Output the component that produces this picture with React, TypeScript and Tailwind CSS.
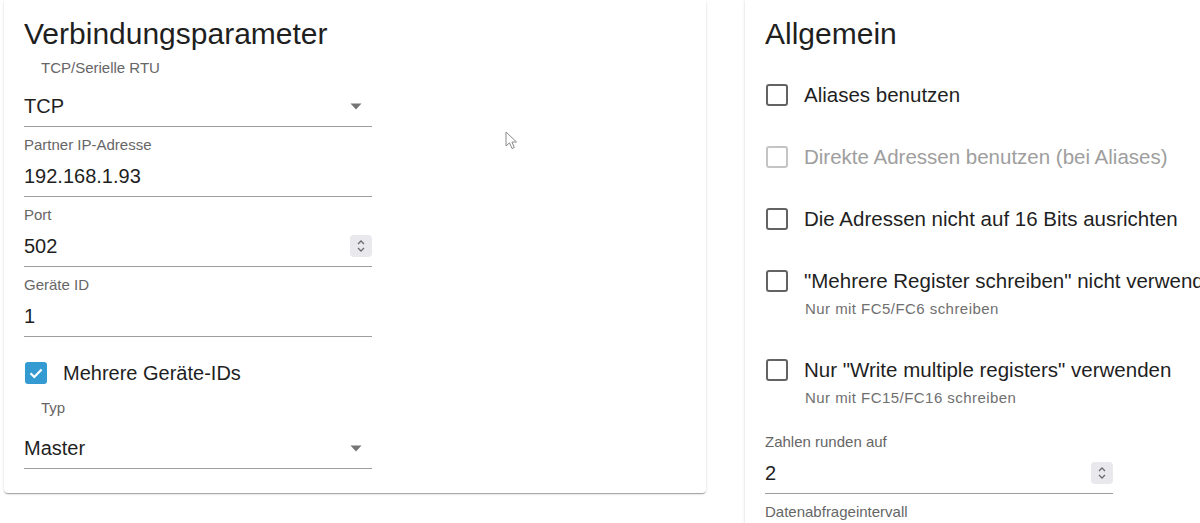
import React from 'react';

const font = { fontFamily: '"Liberation Sans", Arial, sans-serif' };

function DropArrow() {
  return (
    <svg width="12" height="7" viewBox="0 0 12 7" className="shrink-0">
      <path d="M0.5 0.5 L11.5 0.5 L6 6.5 Z" fill="#757575" />
    </svg>
  );
}

function Spinner() {
  return (
    <div className="flex h-[22px] w-[22px] shrink-0 items-center justify-center rounded-sm bg-[#e9e9ed]">
      <svg width="10" height="16" viewBox="0 0 10 16">
        <path d="M2 6 L5 3 L8 6" fill="none" stroke="#6b6b6b" strokeWidth="1.3" />
        <path d="M2 10 L5 13 L8 10" fill="none" stroke="#6b6b6b" strokeWidth="1.3" />
      </svg>
    </div>
  );
}

function TextField({ label, value, number = false }: { label: string; value?: string; number?: boolean }) {
  return (
    <div className="w-[348px] pb-2">
      <div className="text-[15px] leading-5 text-[#666666]">{label}</div>
      {value !== undefined && (
        <div className="mt-[9px] flex items-center justify-between border-b border-[#9e9e9e] pb-2">
          <span className="text-[20px] leading-6 text-[#1f1f1f]">{value}</span>
          {number && <Spinner />}
        </div>
      )}
    </div>
  );
}

function SelectField({ label, value, gap = 'mt-[17px]' }: { label: string; value: string; gap?: string }) {
  return (
    <div className="w-[348px] pb-2">
      <div className="pl-[17px] text-[15px] leading-5 text-[#666666]">{label}</div>
      <div className={`${gap} flex items-center justify-between border-b border-[#9e9e9e] pb-2 pr-[10px]`}>
        <span className="text-[20px] leading-6 text-[#1f1f1f]">{value}</span>
        <DropArrow />
      </div>
    </div>
  );
}

function CheckBox({ checked = false, disabled = false }: { checked?: boolean; disabled?: boolean }) {
  if (checked) {
    return (
      <div className="flex h-[22px] w-[22px] shrink-0 items-center justify-center rounded-[3px] bg-[#339bd2]">
        <svg width="16" height="16" viewBox="0 0 16 16">
          <path d="M2.5 8.2 L6.3 12 L13.6 4.4" fill="none" stroke="white" strokeWidth="2.2" />
        </svg>
      </div>
    );
  }
  return (
    <div
      className={`h-[22px] w-[22px] shrink-0 rounded-[3px] border-2 ${disabled ? 'border-[#c4c4c4]' : 'border-[#636363]'}`}
    />
  );
}

function CheckRow({ label, helper, disabled = false }: { label: string; helper?: string; disabled?: boolean }) {
  return (
    <div className={`pt-[19px] ${helper ? 'pb-5' : 'pb-[19px]'}`}>
      <div className="flex items-center gap-4 pl-px">
        <CheckBox disabled={disabled} />
        <span className={`whitespace-nowrap text-[20.5px] leading-6 ${disabled ? 'text-[#9e9e9e]' : 'text-[#1f1f1f]'}`}>
          {label}
        </span>
      </div>
      {helper && (
        <div className="mt-[6px] pl-[40px] text-[15px] leading-5 tracking-[0.45px] text-[#6f6f6f]">{helper}</div>
      )}
    </div>
  );
}

export default function App() {
  return (
    <div className="relative flex h-[523px] w-[1200px] overflow-hidden bg-white" style={font}>
      {/* Verbindungsparameter */}
      <div className="ml-1 h-[493px] w-[702px] shrink-0 rounded-b-[4px] bg-white px-5 pt-4 shadow-[0_2px_1px_-1px_rgba(0,0,0,0.2),0_1px_1px_0_rgba(0,0,0,0.14),0_1px_3px_0_rgba(0,0,0,0.12)]">
        <h2 className="text-[30px] leading-9 text-[#1f1f1f]">Verbindungsparameter</h2>
        <div className="mt-[6px]">
          <SelectField label="TCP/Serielle RTU" value="TCP" gap="mt-[16px]" />
          <TextField label="Partner IP-Adresse" value="192.168.1.93" />
          <TextField label="Port" value="502" number />
          <TextField label="Geräte ID" value="1" />
        </div>
        <div className="mt-4 flex items-center gap-4 pl-px">
          <CheckBox checked />
          <span className="text-[20px] leading-6 text-[#1f1f1f]">Mehrere Geräte-IDs</span>
        </div>
        <div className="mt-[13px]">
          <SelectField label="Typ" value="Master" gap="mt-[18px]" />
        </div>
      </div>

      {/* Allgemein */}
      <div className="ml-[39px] h-[560px] w-[720px] shrink-0 bg-white px-5 pt-4 shadow-[0_2px_1px_-1px_rgba(0,0,0,0.2),0_1px_1px_0_rgba(0,0,0,0.14),0_1px_3px_0_rgba(0,0,0,0.12)]">
        <h2 className="text-[30px] leading-9 text-[#1f1f1f]">Allgemein</h2>
        <div className="mt-3">
          <CheckRow label="Aliases benutzen" />
          <CheckRow label="Direkte Adressen benutzen (bei Aliases)" disabled />
          <CheckRow label="Die Adressen nicht auf 16 Bits ausrichten" />
          <CheckRow label={'"Mehrere Register schreiben" nicht verwenden'} helper="Nur mit FC5/FC6 schreiben" />
          <CheckRow label={'Nur "Write multiple registers" verwenden'} helper="Nur mit FC15/FC16 schreiben" />
        </div>
        <div className="mt-1">
          <TextField label="Zahlen runden auf" value="2" number />
          <TextField label="Datenabfrageintervall" />
        </div>
      </div>

      {/* mouse cursor */}
      <svg className="absolute left-[505px] top-[131px]" width="14" height="20" viewBox="0 0 14 20">
        <path
          d="M1 1 L1 15 L4.5 11.8 L7 17.5 L9.3 16.5 L6.9 11 L11.5 11 Z"
          fill="white"
          stroke="#8a8a8a"
          strokeWidth="1"
          strokeLinejoin="round"
        />
      </svg>
    </div>
  );
}
